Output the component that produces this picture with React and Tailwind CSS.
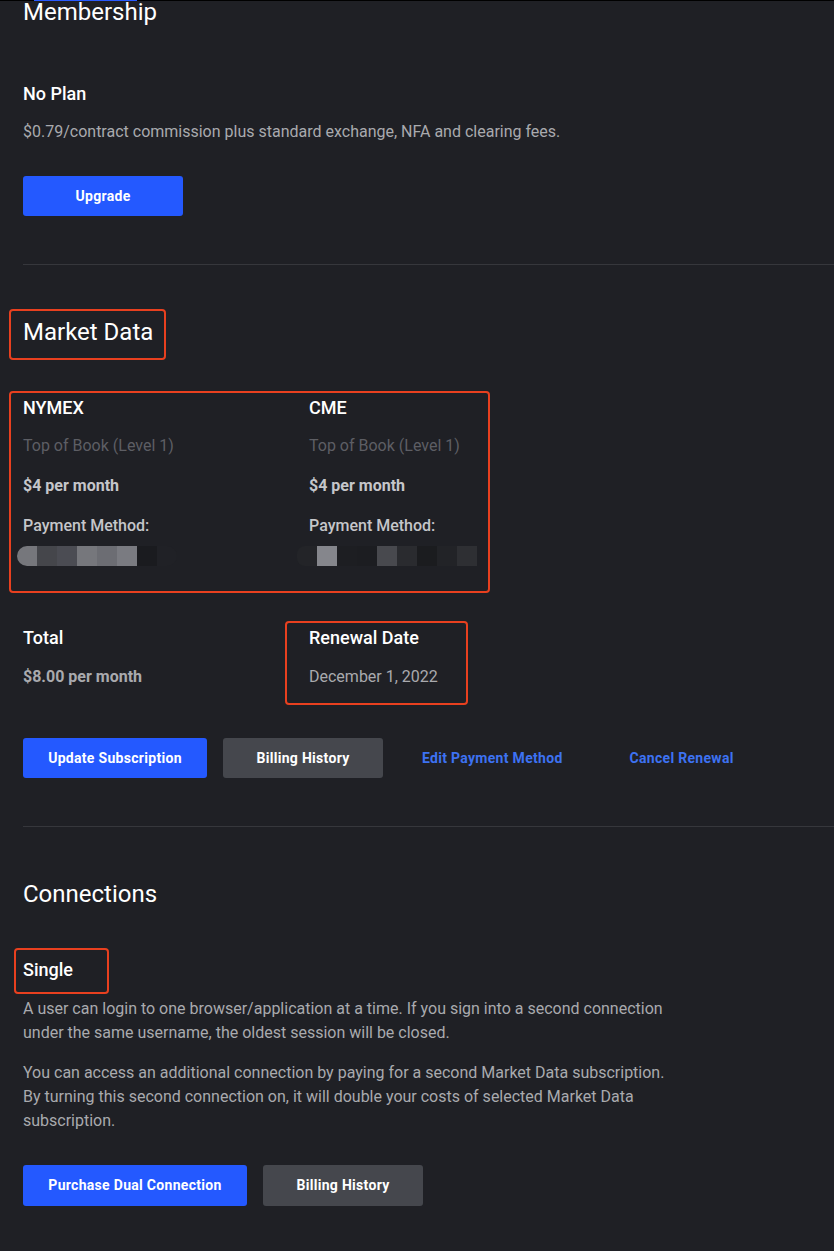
import React from 'react';

const nymexBlur = ['bg-[#76777c] rounded-l-[10px]', 'bg-[#45464b]', 'bg-[#4b4c53]', 'bg-[#76777c]', 'bg-[#6c6d73]', 'bg-[#7a7b81]', 'bg-[#1a1b1f]', 'bg-[#202126] rounded-r-[10px]'];
const cmeBlur = ['bg-[#232428] rounded-l-[8px]', 'bg-[#85868c]', 'bg-[#1d1e22]', 'bg-[#1c1d21]', 'bg-[#48494e]', 'bg-[#2a2b2f]', 'bg-[#1b1c1f]', 'bg-[#222327]', 'bg-[#2e2f33]'];

const Exchange = ({ name, blur, blurShift }) => (
  <div className="w-[286px] shrink-0">
    <div className="text-[18px] font-medium text-white leading-[22px]">{name}</div>
    <div className="mt-[16px] text-[16px] text-[#5d5e64] leading-[22px]">Top of Book (Level 1)</div>
    <div className="mt-[18px] text-[16px] font-bold text-[#c5c6ca] leading-[22px]">$4 per month</div>
    <div className="mt-[18px] text-[16px] font-medium text-[#c5c6ca] leading-[22px]">Payment Method:</div>
    <div className={'mt-[9px] flex h-[20px] ' + blurShift}>
      {blur.map((c, i) => (
        <div key={i} className={'w-[20px] h-[20px] ' + c} />
      ))}
    </div>
  </div>
);

const App = () => {
  return (
    <div
      className="min-h-[1251px] bg-[#1f2025] text-[#a9aaae] border-t border-black relative"
      style={{ fontFamily: 'Roboto, "Liberation Sans", sans-serif' }}
    >
      <div className="absolute left-[34px] top-[-1px] w-[103px] h-[1px] bg-[#2a5bff]" />

      {/* Membership */}
      <div className="pl-[23px]">
        <h2 className="text-[24px] text-white leading-[24px] mt-[-1px]">Membership</h2>
        <div className="mt-[58px] text-[18px] font-medium text-white leading-[24px]">No Plan</div>
        <p className="mt-[14px] text-[16px] leading-[24px]">
          $0.79/contract commission plus standard exchange, NFA and clearing fees.
        </p>
        <button className="mt-[32px] w-[160px] h-[40px] rounded-[3px] bg-[#2459ff] text-white text-[14px] font-bold tracking-[0.3px]">
          Upgrade
        </button>
        <div className="mt-[48px] h-[1px] bg-[#36373c]" />
      </div>

      {/* Market Data */}
      <div className="pl-[23px]">
        <div className="mt-[44px] ml-[-14px] inline-block border-2 border-[#e8401f] rounded-[4px] px-[12px] pt-[6px] w-[157px] h-[51px]">
          <h2 className="text-[24px] text-white leading-[30px] whitespace-nowrap">Market Data</h2>
        </div>
        <div className="mt-[31px] ml-[-14px] w-[481px] h-[202px] border-2 border-[#e8401f] rounded-[4px] pl-[12px] pt-[4px] flex">
          <Exchange name="NYMEX" blur={nymexBlur} blurShift="ml-[-6px]" />
          <Exchange name="CME" blur={cmeBlur} blurShift="ml-[-12px]" />
        </div>

        <div className="mt-[28px] flex">
          <div className="w-[262px] pt-[6px]">
            <div className="text-[18px] font-medium text-white leading-[22px]">Total</div>
            <div className="mt-[17px] text-[16px] font-bold text-[#a9aaae] leading-[22px]">$8.00 per month</div>
          </div>
          <div className="w-[183px] h-[84px] border-2 border-[#e8401f] rounded-[4px] pl-[22px] pt-[4px]">
            <div className="text-[18px] font-medium text-white leading-[22px]">Renewal Date</div>
            <div className="mt-[17px] text-[16px] text-[#a9aaae] leading-[22px]">December 1, 2022</div>
          </div>
        </div>

        <div className="mt-[33px] flex items-center">
          <button className="w-[184px] h-[40px] rounded-[3px] bg-[#2459ff] text-white text-[14px] font-bold tracking-[0.3px]">
            Update Subscription
          </button>
          <button className="ml-[16px] w-[160px] h-[40px] rounded-[3px] bg-[#45474d] text-white text-[14px] font-bold tracking-[0.3px]">
            Billing History
          </button>
          <button className="ml-[39px] text-[#3d72f2] text-[14px] font-bold tracking-[0.3px]">Edit Payment Method</button>
          <button className="ml-[67px] text-[#3d72f2] text-[14px] font-bold tracking-[0.3px]">Cancel Renewal</button>
        </div>
        <div className="mt-[48px] h-[1px] bg-[#36373c]" />
      </div>

      {/* Connections */}
      <div className="pl-[23px] pb-[40px]">
        <h2 className="mt-[53px] text-[24px] text-white leading-[28px]">Connections</h2>
        <div className="mt-[40px] ml-[-9px] w-[95px] h-[46px] border-2 border-[#e8401f] rounded-[4px] pl-[7px] pt-[9px]">
          <div className="text-[18px] font-medium text-white leading-[22px]">Single</div>
        </div>
        <p className="mt-[3px] w-[648px] text-[16px] leading-[24px]">
          A user can login to one browser/application at a time. If you sign into a second connection under the same username, the oldest session will be closed.
        </p>
        <p className="mt-[16px] w-[648px] text-[16px] leading-[24px]">
          You can access an additional connection by paying for a second Market Data subscription. By turning this second connection on, it will double your costs of selected Market Data subscription.
        </p>
        <div className="mt-[32px] flex">
          <button className="w-[224px] h-[41px] rounded-[3px] bg-[#2459ff] text-white text-[14px] font-bold tracking-[0.3px]">
            Purchase Dual Connection
          </button>
          <button className="ml-[16px] w-[160px] h-[41px] rounded-[3px] bg-[#45474d] text-white text-[14px] font-bold tracking-[0.3px]">
            Billing History
          </button>
        </div>
      </div>
    </div>
  );
};

export default App;
